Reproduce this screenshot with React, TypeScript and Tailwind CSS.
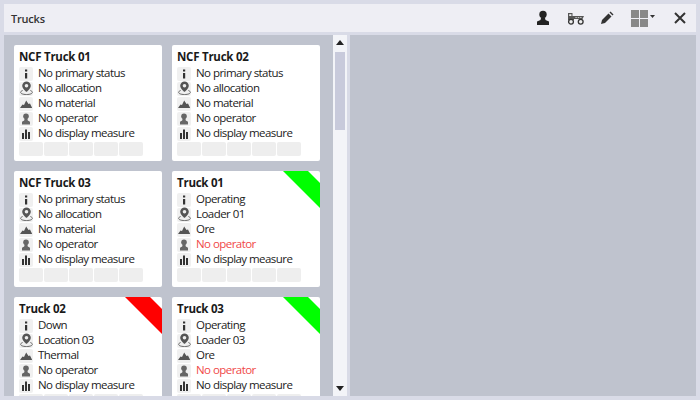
import React from "react";

const Info = () => (
  <svg width="14" height="14" viewBox="0 0 14 14"><rect x="6" y="2.500" width="2.200" height="2" fill="#333" /><rect x="6" y="6" width="2.200" height="5.500" fill="#333" /></svg>
);
const Pin = () => (
  <svg width="15" height="15" viewBox="0 0 15 15" className="shrink-0">
    <path d="M7.500.5a4.300 4.300 0 0 0-4.300 4.300c0 2.900 4.300 6.200 4.300 6.200s4.300-3.300 4.300-6.200A4.300 4.300 0 0 0 7.500.5z" fill="#555" />
    <circle cx="7.500" cy="4.800" r="1.800" fill="#eee" />
    <path d="M3.600 9.500C.2 10.800 1 13.500 7.500 13.500s7.300-2.700 3.900-4" fill="none" stroke="#666" strokeWidth="1" />
  </svg>
);
const Mound = () => (
  <svg width="14" height="14" viewBox="0 0 14 14"><path d="M1 11 3.500 7.500l1.500.5L7.200 3.500 9.500 7l1.500-.5 2.200 4.500z" fill="#555" /></svg>
);
const Person = () => (
  <svg width="14" height="14" viewBox="0 0 14 14"><circle cx="7" cy="4.300" r="2.800" fill="#666" /><path d="M5.600 6.500h2.800l.4 2 2.200 1.200V12.500H3V9.700l2.200-1.200z" fill="#666" /></svg>
);
const Bars = () => (
  <svg width="14" height="14" viewBox="0 0 14 14"><rect x="3" y="6" width="2" height="6" fill="#333" /><rect x="6" y="2.500" width="2" height="9.500" fill="#333" /><rect x="9" y="5" width="2" height="7" fill="#333" /></svg>
);

const Row = ({ icon, text, red }: { icon: React.ReactNode; text: string; red?: boolean }) => (
  <div className="flex h-[15px] items-center gap-[5px]">
    <div className="flex h-[14px] w-[14px] shrink-0 items-center justify-center rounded-[2px] bg-[#f0f0f0]">{icon}</div>
    <span className={red ? "mt-[-2px] whitespace-nowrap text-[#f04848]" : "mt-[-2px] whitespace-nowrap text-[#222222]"}>{text}</span>
  </div>
);

type T = { name: string; status?: string; alloc?: string; mat?: string; red?: boolean; ribbon?: string };

const Card = ({ t }: { t: T }) => (
  <div className="relative h-[116px] w-[148px] shrink-0 overflow-hidden rounded-[2px] bg-white pl-[5px] pt-[4px]">
    {t.ribbon && (
      <svg className="absolute right-0 top-0" width="37" height="37" viewBox="0 0 37 37">
        <polygon points="0,0 25,0 37,12 37,37" fill={t.ribbon} />
      </svg>
    )}
    <div className="h-[17px] text-[11.5px] font-bold leading-[16px] tracking-[-0.25px] text-[#1a1a1a]">{t.name}</div>
    <Row icon={<Info />} text={t.status ?? "No primary status"} />
    <Row icon={<Pin />} text={t.alloc ?? "No allocation"} />
    <Row icon={<Mound />} text={t.mat ?? "No material"} />
    <Row icon={<Person />} text="No operator" red={t.red} />
    <Row icon={<Bars />} text="No display measure" />
    <div className="mt-[1px] flex gap-[1px]">
      {[0, 1, 2, 3, 4].map((i) => (
        <div key={i} className="h-[14px] w-[24px] rounded-[2px] bg-[#eeeeee]" />
      ))}
    </div>
  </div>
);

const trucks: T[] = [
  { name: "NCF Truck 01" },
  { name: "NCF Truck 02" },
  { name: "NCF Truck 03" },
  { name: "Truck 01", status: "Operating", alloc: "Loader 01", mat: "Ore", red: true, ribbon: "#00ff00" },
  { name: "Truck 02", status: "Down", alloc: "Location 03", mat: "Thermal", ribbon: "#ff0000" },
  { name: "Truck 03", status: "Operating", alloc: "Loader 03", mat: "Ore", red: true, ribbon: "#00ff00" },
];

export default function App() {
  return (
    <div
      className="flex h-[400px] w-[700px] flex-col overflow-hidden bg-[#d9dbe7] p-[4px] text-[11.5px] leading-[15px] tracking-[-0.55px]"
      style={{ fontFamily: '"Open Sans", "Liberation Sans", sans-serif' }}
    >
      <div className="flex h-[28px] shrink-0 items-center bg-[#eeeef4] pl-[7px]">
        <span className="text-[11px] font-semibold tracking-[-0.2px] text-[#333333]">Trucks</span>
        <div className="ml-auto flex items-center">
          <svg width="16" height="16" viewBox="0 0 16 16" className="mr-[16px]">
            <circle cx="8" cy="4.500" r="3.700" fill="#222" />
            <path d="M6 8h4l.5 2L14 11.500V15H2v-3.500L5.500 10z" fill="#222" />
          </svg>
          <svg width="18" height="13" viewBox="0 0 18 13" className="mr-[15px]">
            <path d="M1 1h4.500v3H17l-1.500 3H7V8H1z" fill="#555" />
            <path d="M2.200 2.200h2.200V4H2.200z" fill="#eee" />
            <path d="M8 5l1 1.200L10.300 5l1.200 1.200L12.700 5l1.100 1.200L15 5z" fill="#ccc" />
            <circle cx="4" cy="9.700" r="2.400" fill="#eee" stroke="#333" strokeWidth="1.300" />
            <circle cx="13.700" cy="9.700" r="2.400" fill="#eee" stroke="#333" strokeWidth="1.300" />
          </svg>
          <svg width="14" height="14" viewBox="0 0 14 14" className="mr-[17px]">
            <path d="M1 13l1-4 6.500-6.500 3 3L5 12z" fill="#333" />
            <path d="M9.500 1.500 10.500.5 13.500 3.500l-1 1z" fill="#333" />
          </svg>
          <div className="mr-[2px] grid grid-cols-2 gap-[1px]">
            <div className="h-[8px] w-[8px] bg-[#888888]" />
            <div className="h-[8px] w-[8px] bg-[#888888]" />
            <div className="h-[8px] w-[8px] bg-[#888888]" />
            <div className="h-[8px] w-[8px] bg-[#888888]" />
          </div>
          <svg width="5" height="3" viewBox="0 0 5 3" className="mb-[3px] mr-[18px]"><polygon points="0,0 5,0 2.500,3" fill="#333" /></svg>
          <svg width="14" height="14" viewBox="0 0 14 14" className="mr-[9px]">
            <path d="M2 2l10 10M12 2 2 12" stroke="#333" strokeWidth="2" fill="none" />
          </svg>
        </div>
      </div>
      <div className="mt-[3px] flex min-h-0 flex-1 bg-[#bfc3ce]">
        <div className="flex w-[329px] shrink-0 flex-wrap content-start gap-[10px] overflow-hidden pl-[10px] pt-[10px]">
          {trucks.map((t) => (
            <Card key={t.name} t={t} />
          ))}
        </div>
        <div className="flex w-[14px] shrink-0 flex-col items-center bg-[#f3f4f8]">
          <svg width="8" height="5" viewBox="0 0 8 5" className="mt-[5px]"><polygon points="4,0 8,5 0,5" fill="#222" /></svg>
          <div className="mt-[7px] h-[78px] w-[10px] bg-[#c8cadb]" />
          <svg width="8" height="5" viewBox="0 0 8 5" className="mb-[5px] mt-auto"><polygon points="0,0 8,0 4,5" fill="#222" /></svg>
        </div>
        <div className="w-[3px] shrink-0 bg-[#d9dbe7]" />
        <div className="flex-1" />
      </div>
    </div>
  );
}
